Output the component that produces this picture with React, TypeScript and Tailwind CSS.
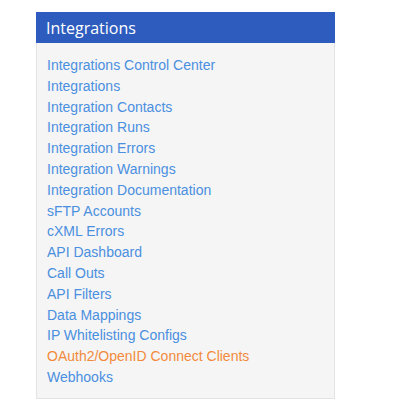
const links = [
  'Integrations Control Center',
  'Integrations',
  'Integration Contacts',
  'Integration Runs',
  'Integration Errors',
  'Integration Warnings',
  'Integration Documentation',
  'sFTP Accounts',
  'cXML Errors',
  'API Dashboard',
  'Call Outs',
  'API Filters',
  'Data Mappings',
  'IP Whitelisting Configs',
  'OAuth2/OpenID Connect Clients',
  'Webhooks',
];

const active = 'OAuth2/OpenID Connect Clients';

export default function App() {
  return (
    <div className="min-h-[419px] w-[412px] bg-white pl-9 pt-3">
      <div className="w-[299px]">
        <div className="flex h-[31px] items-center bg-[#2e5cbe] px-[10px] font-['Open_Sans',sans-serif] text-[16px] text-white">
          Integrations
        </div>
        <ul className="border-x border-b border-[#e3e3e3] bg-[#f5f5f5] px-[10px] pb-[10px] pt-[12px] font-['Liberation_Sans',Arial,sans-serif] text-[14px] leading-[20.8px]">
          {links.map((l) => (
            <li key={l}>
              <a
                href="#"
                className={l === active ? 'text-[#f28a3c]' : 'text-[#4a8fe0]'}
              >
                {l}
              </a>
            </li>
          ))}
        </ul>
      </div>
    </div>
  );
}
